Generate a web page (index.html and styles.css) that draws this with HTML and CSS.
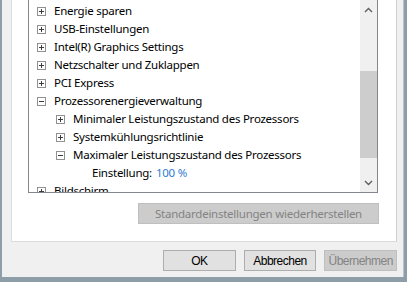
FILE: index.html
```html
<!DOCTYPE html>
<html lang="de">
<head>
    <meta charset="UTF-8">
    <title>Energieoptionen - Erweiterte Einstellungen</title>
    <link rel="stylesheet" href="styles.css">
</head>
<body>

<div class="dialog">
    <div class="panel">
        <div class="tree">
            <ul class="items">
                <li class="row lvl0"><span class="exp plus"></span>Energie sparen</li>
                <li class="row lvl0"><span class="exp plus"></span>USB-Einstellungen</li>
                <li class="row lvl0"><span class="exp plus"></span>Intel(R) Graphics Settings</li>
                <li class="row lvl0"><span class="exp plus"></span>Netzschalter und Zuklappen</li>
                <li class="row lvl0"><span class="exp plus"></span>PCI Express</li>
                <li class="row lvl0"><span class="exp minus"></span>Prozessorenergieverwaltung</li>
                <li class="row lvl1"><span class="exp plus"></span>Minimaler Leistungszustand des Prozessors</li>
                <li class="row lvl1"><span class="exp plus"></span>Systemkühlungsrichtlinie</li>
                <li class="row lvl1"><span class="exp minus"></span>Maximaler Leistungszustand des Prozessors</li>
                <li class="row lvl2">Einstellung: <span class="value">100 %</span></li>
                <li class="row lvl0"><span class="exp plus"></span>Bildschirm</li>
            </ul>
            <div class="scrollbar">
                <div class="arrow">
                    <svg width="9" height="6" viewBox="0 0 9 6"><polyline points="1,5 4.5,1.5 8,5" fill="none" stroke="#5f5f5f" stroke-width="1.4"/></svg>
                </div>
                <div class="track">
                    <div class="thumb"></div>
                </div>
                <div class="arrow">
                    <svg width="9" height="6" viewBox="0 0 9 6"><polyline points="1,1 4.5,4.5 8,1" fill="none" stroke="#5f5f5f" stroke-width="1.4"/></svg>
                </div>
            </div>
        </div>
        <div class="restore">
            <button class="btn wide" disabled>Standardeinstellungen wiederherstellen</button>
        </div>
    </div>

    <div class="actions">
        <button class="btn">OK</button>
        <button class="btn">Abbrechen</button>
        <button class="btn" disabled>Übernehmen</button>
    </div>
</div>

</body>
</html>
```

FILE: styles.css
```css
body {
    margin: 0;
    padding: 0;
    width: 407px;
    height: 282px;
    overflow: hidden;
    background-color: #8e9ea9;
    font-family: "Segoe UI", "Noto Sans", sans-serif;
    font-size: 11.5px;
    letter-spacing: -0.25px;
}

.dialog {
    box-sizing: border-box;
    width: 402px;
    height: 277px;
    margin-left: 2px;
    padding: 0 6px 0 9px;
    background-color: #f0f0f0;
    border-right: 1px solid #b9c3ca;
}

.panel {
    box-sizing: border-box;
    height: 242px;
    padding: 0 18px 0 16px;
    background-color: #fff;
    border-left: 1px solid #dedede;
    border-right: 1px solid #d0d0d0;
    border-bottom: 1px solid #dcdcdc;
}

.tree {
    display: flex;
    height: 193px;
    border: 1px solid #828790;
    border-top: none;
    box-sizing: border-box;
}

.items {
    flex: 1;
    margin: 0;
    padding: 2px 0 0 0;
    list-style: none;
    overflow: hidden;
    color: #000;
}

.row {
    display: flex;
    align-items: center;
    height: 18px;
    line-height: 18px;
    white-space: nowrap;
}

.lvl0 { padding-left: 8px; }
.lvl1 { padding-left: 27px; }
.lvl2 { padding-left: 63px; }

.exp {
    position: relative;
    box-sizing: border-box;
    width: 9px;
    height: 9px;
    margin-right: 8px;
    border: 1px solid #919191;
    flex-shrink: 0;
}

.exp::before,
.plus::after {
    content: "";
    position: absolute;
    background-color: #3c3c3c;
}

.exp::before {
    left: 1px;
    top: 3px;
    width: 5px;
    height: 1px;
}

.plus::after {
    left: 3px;
    top: 1px;
    width: 1px;
    height: 5px;
}

.value {
    margin-left: 4px;
    color: #2f7bd0;
}

.scrollbar {
    display: flex;
    flex-direction: column;
    width: 17px;
    background-color: #f0f0f0;
}

.arrow {
    display: flex;
    align-items: center;
    justify-content: center;
    height: 20px;
}

.arrow:last-child {
    height: 18px;
}

.track {
    flex: 1;
    padding-top: 51px;
}

.thumb {
    height: 87px;
    background-color: #cdcdcd;
}

.restore {
    display: flex;
    justify-content: flex-end;
    padding-top: 10px;
    margin-right: -1px;
}

.btn {
    box-sizing: border-box;
    height: 21px;
    padding: 0;
    font-family: "Segoe UI", "Noto Sans", sans-serif;
    font-size: 11.5px;
    letter-spacing: -0.25px;
    color: #000;
    background-color: #e1e1e1;
    border: 1px solid #adadad;
}

.btn:disabled {
    color: #838383;
    background-color: #cccccc;
    border-color: #bfbfbf;
}

.wide {
    width: 241px;
}

.actions {
    display: flex;
    gap: 8px;
    padding: 8px 0 0 152px;
}

.actions .btn {
    width: 74px;
    font-family: "Liberation Sans", Arial, sans-serif;
    font-size: 12px;
    letter-spacing: -0.5px;
}
```
